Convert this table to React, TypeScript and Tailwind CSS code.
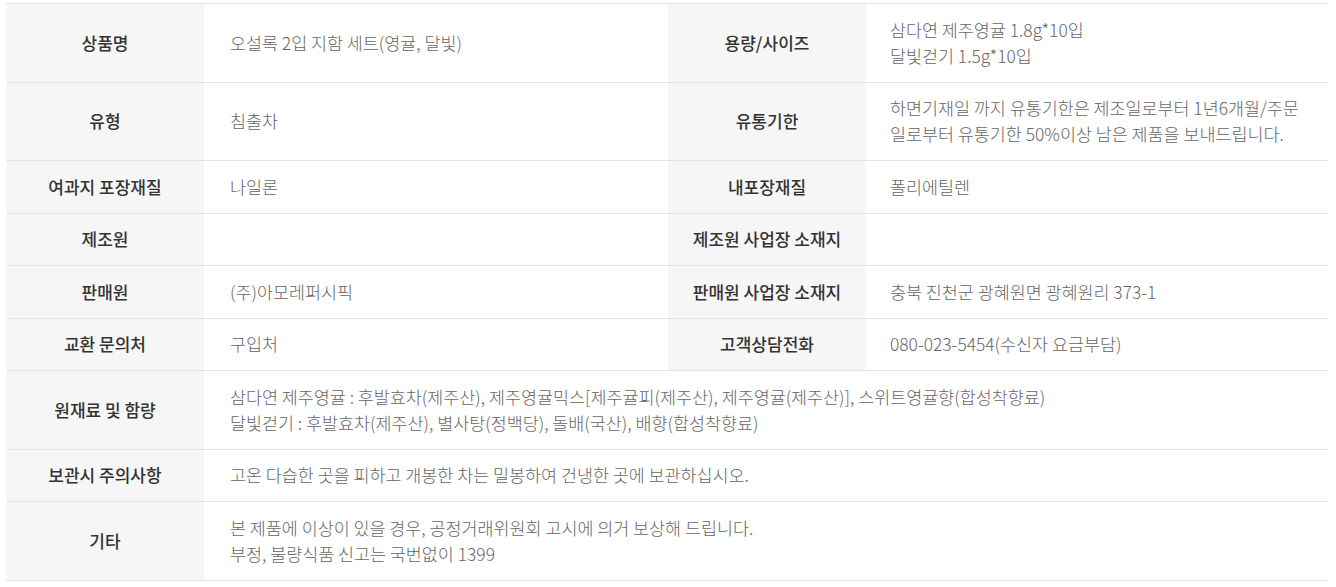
const rows: { th: string; td: React.ReactNode; th2?: string; td2?: React.ReactNode }[] = [
  {
    th: '상품명',
    td: '오설록 2입 지함 세트(영귤, 달빛)',
    th2: '용량/사이즈',
    td2: (
      <>
        삼다연 제주영귤 1.8g*10입
        <br />
        달빛걷기 1.5g*10입
      </>
    ),
  },
  {
    th: '유형',
    td: '침출차',
    th2: '유통기한',
    td2: (
      <>
        하면기재일 까지 유통기한은 제조일로부터 1년6개월/주문
        <br />
        일로부터 유통기한 50%이상 남은 제품을 보내드립니다.
      </>
    ),
  },
  { th: '여과지 포장재질', td: '나일론', th2: '내포장재질', td2: '폴리에틸렌' },
  { th: '제조원', td: '', th2: '제조원 사업장 소재지', td2: '' },
  { th: '판매원', td: '(주)아모레퍼시픽', th2: '판매원 사업장 소재지', td2: '충북 진천군 광혜원면 광혜원리 373-1' },
  { th: '교환 문의처', td: '구입처', th2: '고객상담전화', td2: '080-023-5454(수신자 요금부담)' },
  {
    th: '원재료 및 함량',
    td: (
      <>
        삼다연 제주영귤 : 후발효차(제주산), 제주영귤믹스[제주귤피(제주산), 제주영귤(제주산)], 스위트영귤향(합성착향료)
        <br />
        달빛걷기 : 후발효차(제주산), 별사탕(정백당), 돌배(국산), 배향(합성착향료)
      </>
    ),
  },
  { th: '보관시 주의사항', td: '고온 다습한 곳을 피하고 개봉한 차는 밀봉하여 건냉한 곳에 보관하십시오.' },
  {
    th: '기타',
    td: (
      <>
        본 제품에 이상이 있을 경우, 공정거래위원회 고시에 의거 보상해 드립니다.
        <br />
        부정, 불량식품 신고는 국번없이 1399
      </>
    ),
  },
];

const thCls = 'bg-[#f6f6f6] text-center text-[17px] font-medium text-[#333] px-2 py-[12.75px] align-middle';
const tdCls = 'text-left text-[17.4px] font-light text-[#666] py-[12.75px] align-middle';

export default function App() {
  return (
    <div className="bg-white min-h-screen pt-[3px] pl-[6px] pr-[8px] font-['Noto_Sans_CJK_KR','Noto_Sans',sans-serif] leading-[26px]">
      <table className="w-full table-fixed border-collapse border-t border-[#e3e3e3]">
        <colgroup>
          <col className="w-[198px]" />
          <col className="w-[464px]" />
          <col className="w-[198px]" />
          <col />
        </colgroup>
        <tbody>
          {rows.map((r) => (
            <tr key={r.th} className="border-b border-[#e3e3e3]">
              <th className={thCls}>{r.th}</th>
              {r.th2 ? (
                <>
                  <td className={`${tdCls} pl-[26px] pr-2`}>{r.td}</td>
                  <th className={thCls}>{r.th2}</th>
                  <td className={`${tdCls} pl-6 pr-2`}>{r.td2}</td>
                </>
              ) : (
                <td colSpan={3} className={`${tdCls} pl-[26px] pr-2`}>
                  {r.td}
                </td>
              )}
            </tr>
          ))}
        </tbody>
      </table>
    </div>
  );
}
